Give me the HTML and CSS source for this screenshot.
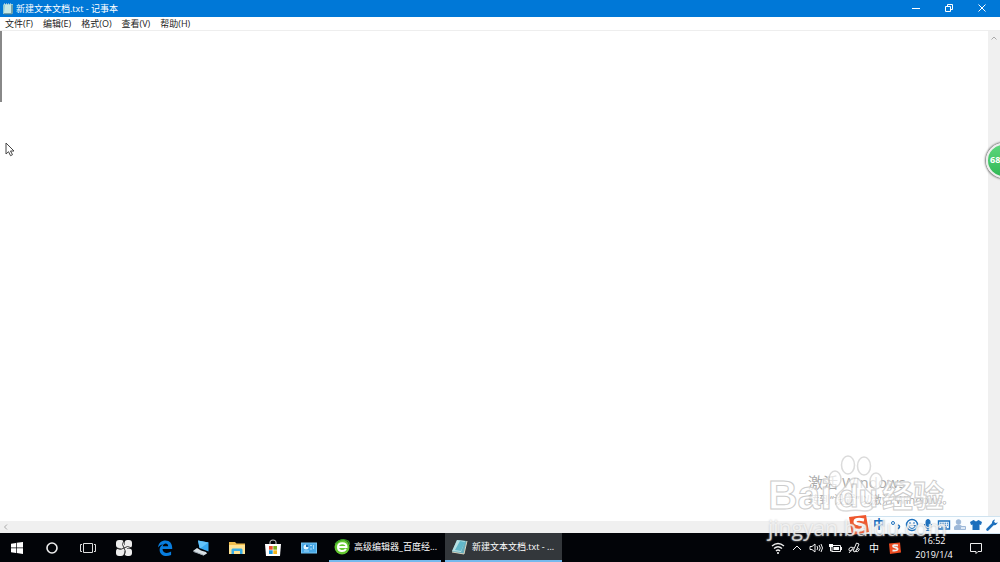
FILE: index.html
```html
<!DOCTYPE html>
<html lang="zh-CN">
<head>
    <meta charset="UTF-8">
    <meta name="viewport" content="width=device-width, initial-scale=1.0">
    <title>新建文本文档.txt - 记事本</title>
    <link rel="stylesheet" href="styles.css">
</head>
<body>
    <header class="titlebar">
        <svg class="app-icon" viewBox="0 0 12 12"><path d="M2 1h9v9l-1 1H1V2z" fill="#91cbd3"/><path d="M3 2h6v8H2z" fill="#c8e8e4"/><path d="M10 2v8M2 11h8" stroke="#547b82"/><path d="M2 1h8" stroke="#eee" stroke-dasharray="1"/></svg>
        <h1>新建文本文档.txt - 记事本</h1>
        <div class="window-buttons">
            <button aria-label="最小化"><svg viewBox="0 0 10 10"><path d="M1 5.500h8"/></svg></button>
            <button aria-label="还原"><svg viewBox="0 0 10 10"><path d="M1.500 3.500h5v5h-5zM3.500 3V1.500h5v5H7"/></svg></button>
            <button aria-label="关闭"><svg viewBox="0 0 10 10"><path d="M1.500 1.500l7 7M8.500 1.500l-7 7"/></svg></button>
        </div>
    </header>
    <nav class="menubar">
        <button>文件(F)</button>
        <button>编辑(E)</button>
        <button>格式(O)</button>
        <button>查看(V)</button>
        <button>帮助(H)</button>
    </nav>
    <main class="editor">
        <textarea class="document" aria-label="文档内容" spellcheck="false"></textarea>
        <div class="scroll-y">
            <button aria-label="向上滚动"><svg viewBox="0 0 8 8"><path d="M1.500 5.500L4 3l2.500 2.500"/></svg></button>
            <button aria-label="向下滚动"><svg viewBox="0 0 8 8"><path d="M1.500 3L4 5.500 6.500 3"/></svg></button>
        </div>
        <div class="scroll-x">
            <button aria-label="向左滚动"><svg viewBox="0 0 8 8"><path d="M5 1.500L2.500 4 5 6.500"/></svg></button>
        </div>
        <div class="caret"></div>
    </main>
    <footer class="taskbar">
        <div class="system">
            <button aria-label="开始"><svg viewBox="0 0 18 18"><path d="M3 4.700l5-.8v4.700H3zM8.700 3.800L15 3v5.600H8.700zM3 9.300h5V14l-5-.7zM8.700 9.300H15V15l-6.300-.9z" fill="#fff"/></svg></button>
            <button aria-label="搜索"><svg viewBox="0 0 18 18"><circle cx="9" cy="9" r="5" fill="none" stroke="#eee" stroke-width="1.600"/></svg></button>
            <button aria-label="任务视图"><svg viewBox="0 0 18 18" fill="none" stroke="#ddd"><path d="M4.500 4.500h9v9h-9zM3 5.500H1.500v7H3M15 5.500h1.500v7H15"/></svg></button>
            <button aria-label="四叶草"><svg viewBox="0 0 18 18"><g fill="#eee"><rect x="1" y="1" width="8" height="8" rx="3"/><rect x="9.500" y="1" width="7.500" height="8" rx="3"/><rect x="1" y="9.500" width="8" height="7.500" rx="3"/><rect x="9.500" y="9.500" width="7.500" height="7.500" rx="3"/><circle cx="9" cy="9" r="3"/></g><path d="M9 9Q6 6 9 1M9 9q3-3 8 0M9 9q3 3 0 8M9 9q-3 3-8 0" fill="none" stroke="#222" stroke-width=".9"/></svg></button>
        </div>
        <div class="pinned">
            <button aria-label="Edge"><svg viewBox="0 0 18 18"><path d="M2 8.500C2.500 4 5.500 1.500 9.500 1.500c4.500 0 7 3.300 6.700 8.400H6.500c.2 4.600 5.200 4.800 8.600 2.700V16c-5 2.400-11.500.8-11.500-5.200 0-2.300 1.200-4.400 3.500-5.400C4.800 5.500 3 6.800 2 8.500zm4.700-1.200h5.500c0-3.800-4.800-3.600-5.500 0z" fill="#087dde"/></svg></button>
            <button aria-label="此电脑"><svg viewBox="0 0 18 18"><path d="M6 1.500l10.500 2v9L7.500 9z" fill="#37a8ef"/><path d="M6 1.500l10.500 2-8 5.700-1-.5z" fill="#62c3fa"/><path d="M5 9l4 2.500 5 1.500 1 1.500-3.500 2L1 12z" fill="#d8e0e5"/><path d="M1.500 12.500l10 3.500" stroke="#a1adb5"/></svg></button>
            <button aria-label="文件资源管理器"><svg viewBox="0 0 18 18"><path d="M1 3h6l1.500 1.500H17V15H1z" fill="#efbd4e"/><path d="M1 6h16v9H1z" fill="#ffe394"/><path d="M3.500 15v-4.500l1-1h9l1 1V15H12v-3H6v3z" fill="#39aee8"/></svg></button>
            <button aria-label="应用商店"><svg viewBox="0 0 18 18"><path d="M6 6V3q0-2 3-2t3 2v3" fill="none" stroke="#ccc"/><path d="M1 5h16l-1 12H2z" fill="#fff"/><path d="M5 7h3.700v3.700H5z" fill="#eb4d2f"/><path d="M9.300 7H13v3.700H9.300z" fill="#7caf1f"/><path d="M5 11.300h3.700V15H5z" fill="#1c98df"/><path d="M9.300 11.300H13V15H9.300z" fill="#f4b51b"/></svg></button>
            <button aria-label="控制面板"><svg viewBox="0 0 18 18"><path d="M1 3.500h16v11H1z" fill="#75c6f5"/><path d="M2 4.500h14v9H2z" fill="#48a8e6"/><circle cx="6" cy="8" r="2.500" fill="#dff5ff"/><path d="M6 8V5.500A2.500 2.500 0 0 1 8.500 8z" fill="#176ab0"/><path d="M10 6.500h2M13.500 6v4M11 9v2M4 12h5" stroke="#a6dbf8"/></svg></button>
        </div>
        <div class="tasks">
            <button class="task">
                <svg viewBox="0 0 18 18"><circle cx="9" cy="9" r="7.500" fill="#65c832"/><path d="M2 6Q9-1 15 3q2 2 1 4" fill="none" stroke="#389e25" stroke-width="1.200"/><path d="M5 9h8.500c0-5-8.500-5-8.500 0 0 5 6 5 8 2" fill="none" stroke="#fff" stroke-width="2"/></svg>
                <span>高级编辑器_百度经...</span>
            </button>
            <button class="task active">
                <svg viewBox="0 0 18 18"><path d="M6 2l10 1-3 13-12-2z" fill="#67aebd"/><path d="M6 2l8 1-4 11-9-1z" fill="#b6e0e2"/><path d="M9 3l5 1-4 9-6-1z" fill="#62b8ca"/><path d="M16 3l-3 13-12-2" fill="none" stroke="#d6d2bd"/></svg>
                <span>新建文本文档.txt - ...</span>
            </button>
        </div>
        <div class="tray">
            <button aria-label="网络"><svg viewBox="0 0 14 14"><path d="M1 5q6-5 12 0M3 7.500q4-3.500 8 0M5 10q2-2 4 0" stroke-width="1.400"/><circle cx="7" cy="12" r="1" fill="#fff" stroke="none"/></svg></button>
            <button aria-label="显示隐藏的图标"><svg viewBox="0 0 14 14"><path d="M3 9l4-4 4 4"/></svg></button>
            <button aria-label="音量"><svg viewBox="0 0 14 14"><path d="M1 5.500h2L6 3v8L3 8.500H1zM8 5q1.500 2 0 4M10 4q2.500 3 0 6M12 3q3 4 0 8"/></svg></button>
            <button aria-label="电池"><svg viewBox="0 0 14 14"><path d="M4 4.500h8.500v6H4zM13.500 6v3M2.500 6v4H4"/><path d="M5.500 6h5.500v3H5.500zM1 3h4v3H1z" fill="#fff" stroke="none"/></svg></button>
            <button aria-label="手写笔"><svg viewBox="0 0 14 14"><path d="M6.500 9l3-7 2.500 1-3 7-2 1zM7 7Q3 5 2 8c-1 3 4 2 4 0s-3 3-4 4M8 10q3 2 4-1c1-2-1-2-2 0"/></svg></button>
            <button class="lang">中</button>
            <button aria-label="搜狗输入法"><svg viewBox="0 0 14 14"><path d="M1 2.500l11-1 1 10-11 1.500z" fill="#ed4b20" stroke="none"/><path d="M10 4.500q-5-1-5 .5 0 1 2 1.500 3 .5 2.500 2Q9 10 4.500 9.500" stroke-width="1.800"/></svg></button>
        </div>
        <time class="clock" datetime="2019-01-04T16:52"><span>16:52</span><span>2019/1/4</span></time>
        <button class="notify" aria-label="通知"><svg viewBox="0 0 14 14"><path d="M1.500 2.500h11v8H9L7 12.500v-2H1.500z"/></svg></button>
    </footer>

    <div class="activate">
        <p class="activate-title">激活 Windows</p>
        <p class="activate-text">转到“设置”以激活 Windows。</p>
    </div>

    <!-- Sogou input bar -->
    <div class="ime">
        <svg class="ime-logo" viewBox="0 0 22 22"><path d="M1 3l17-2 3 17-17 3z" fill="#ef572d"/><path d="M16 6Q7 4 7 8c0 3 9 1 8.500 5-.5 4-6 3.500-9.500 2.500" fill="none" stroke="#fff" stroke-width="3"/></svg>
        <button class="ime-lang">中</button>
        <button aria-label="标点"><svg viewBox="0 0 14 14"><circle cx="4" cy="5" r="1.500"/><path d="M9 7q3 1 0 4" stroke-width="1.600"/></svg></button>
        <button aria-label="表情"><svg viewBox="0 0 14 14"><circle cx="7" cy="7" r="5.500" stroke-width="1.400"/><path d="M5 4v2M9 4v2M3.500 7.500h7q-1 3-3.500 3t-3.500-3z"/></svg></button>
        <button aria-label="语音"><svg viewBox="0 0 14 14"><rect x="5" y="1.500" width="4" height="7" rx="2" fill="#1d70bd"/><path d="M3.500 6v1q0 3.500 3.500 3.500T10.500 7V6M7 10v3M4.500 12.500h5"/></svg></button>
        <button aria-label="软键盘"><svg viewBox="0 0 14 14"><path d="M1.500 3h11v8h-11z" stroke-width="1.400"/><path d="M3 5.200h8M3 7.200h8" stroke-dasharray="1.500 .8"/><path d="M4 9.200h6"/></svg></button>
        <button class="ime-user" aria-label="登录"><svg viewBox="0 0 14 14"><circle cx="5.500" cy="4" r="2.300" fill="#9db8d8"/><path d="M1.500 11.500V9q1-2 4-2 2 0 3 1v3.500z" fill="#9db8d8"/><path d="M7.500 8.500h5v3h-5z" fill="#dce8f5"/></svg></button>
        <button aria-label="皮肤"><svg viewBox="0 0 14 14"><path d="M4.500 2L7 3.500 9.500 2l3.500 2-1 3-1.500-.5V12h-7V6.500L2 7 1 4z" fill="#1d70bd" stroke="none"/></svg></button>
        <button aria-label="工具"><svg viewBox="0 0 14 14"><path d="M2.500 11.500l6-6" stroke-width="2.600" stroke-linecap="round"/><path d="M10 1.500Q6.500 2 7 6q3 3 6-1.500L10.500 5 9 4z" fill="#1d70bd" stroke="none"/></svg></button>
    </div>

    <div class="watermark">
        <div class="brand">
            <span class="brand-bai">Bai</span>
            <svg class="paw" viewBox="0 0 54 60">
                <g fill="#fff" stroke="#ccc" stroke-width="1.500"><ellipse cx="20" cy="11" rx="6.500" ry="9"/><ellipse cx="36" cy="12" rx="6.500" ry="9"/><ellipse cx="7" cy="25" rx="6" ry="8"/><ellipse cx="48" cy="27" rx="6" ry="8"/><path d="M27 24c7 0 7 9 14 14 9 7 6 20-5 19-6-1-11-1-17 0C7 58 4 45 12 38c7-5 8-14 15-14z"/></g>
                <text x="11" y="53" class="paw-text">du</text>
            </svg>
            <span class="brand-cn">经验</span>
        </div>
        <div class="site">jingyan.baidu.com</div>
    </div>

    <div class="speed-ball">68</div>
    <svg class="pointer" viewBox="0 0 10 16"><path d="M1 1v11l2.500-2.300 2 4 2-1-2-3.700H9z" fill="#fff" stroke="#444"/></svg>
</body>
</html>
```
FILE: styles.css
```css
* {
    box-sizing: border-box;
}
body {
    margin: 0;
    height: 100vh;
    display: flex;
    flex-direction: column;
    position: relative;
    overflow: hidden;
    background: #fff;
    color: #222;
    font-family: "Open Sans", "Noto Sans CJK SC", sans-serif;
    font-size: 9px;
    line-height: 12px;
}
button {
    display: flex;
    align-items: center;
    justify-content: center;
    padding: 0;
    border: none;
    background: none;
    color: inherit;
    font: inherit;
    flex-shrink: 0;
}
svg {
    display: block;
    flex-shrink: 0;
}
.titlebar {
    height: 17px;
    display: flex;
    align-items: center;
    padding-left: 2px;
    background: #0078d7;
    color: #fff;
}
.app-icon {
    width: 12px;
    height: 12px;
}
h1 {
    margin: 0 0 0 2px;
    font-size: 9px;
    font-weight: normal;
}
.window-buttons {
    display: flex;
    margin-left: auto;
    padding: 0 2px 2px 0;
}
.window-buttons button {
    width: 33px;
}
.window-buttons svg {
    width: 10px;
    height: 10px;
    fill: none;
    stroke: #fff;
}
.menubar {
    height: 13px;
    display: flex;
    align-items: center;
    gap: 10px;
    padding-left: 5px;
}
.editor {
    flex: 1;
    min-height: 0;
    position: relative;
    display: grid;
    grid-template-columns: 1fr 12px;
    grid-template-rows: 1fr 12px;
    border-top: 1px solid #eee;
    background: #f0f0f0;
}
.document {
    width: 100%;
    height: 100%;
    padding: 0;
    border: none;
    outline: none;
    resize: none;
    background: #fff;
    font-family: inherit;
    font-size: 60px;
}
.scroll-y {
    display: flex;
    flex-direction: column;
    justify-content: space-between;
    align-items: center;
    padding-top: 3px;
}
.scroll-x {
    display: flex;
    align-items: center;
    padding-left: 2px;
}
.editor svg {
    width: 8px;
    height: 8px;
    fill: none;
    stroke: #aaa;
}
.caret {
    position: absolute;
    left: 0;
    top: 0;
    width: 2px;
    height: 71px;
    background: #888;
}
.taskbar {
    height: 29px;
    display: flex;
    background: #020408;
    color: #fff;
}
.system, .pinned, .tasks, .tray {
    display: flex;
}
.system button, .pinned button {
    width: 36px;
}
.system button:first-child {
    width: 34px;
}
.system svg, .pinned svg, .task svg {
    width: 18px;
    height: 18px;
}
.pinned {
    margin-left: 5px;
}
.tasks {
    margin-left: 2px;
    gap: 4px;
}
.task {
    width: 112px;
    gap: 3px;
    justify-content: flex-start;
    padding-left: 4px;
    border-bottom: 2px solid #76b9ed;
    white-space: nowrap;
}
.task.active {
    width: 117px;
    padding-left: 6px;
    background: #33373b;
}
.tray {
    margin-left: auto;
}
.tray button {
    width: 19px;
}
.tray svg, .notify svg {
    width: 14px;
    height: 14px;
    fill: none;
    stroke: #eee;
}
.tray .lang {
    width: 22px;
    font-size: 10px;
}
.clock {
    display: flex;
    flex-direction: column;
    align-items: center;
    width: 60px;
    padding-top: 1px;
    line-height: 14px;
}
.notify {
    width: 24px;
    margin-right: 12px;
}
.activate {
    position: absolute;
    right: 49px;
    bottom: 54px;
    width: 143px;
    color: #aaa;
    white-space: nowrap;
}
.activate p {
    margin: 0;
}
.activate-title {
    font-size: 15px;
    line-height: 20px;
}
.activate-text {
    font-size: 11px;
    line-height: 16px;
}
.watermark {
    position: absolute;
    right: 47px;
    bottom: 22px;
    width: 185px;
    color: rgba(255, 255, 255, 0.7);
    white-space: nowrap;
}
.brand {
    display: flex;
    align-items: flex-end;
    margin-bottom: 2px;
    line-height: 38px;
}
.brand-bai, .brand-cn {
    -webkit-text-stroke: 1px #ccc;
    font-weight: bold;
}
.brand-bai {
    width: 60px;
    font-family: "Liberation Sans", sans-serif;
    font-size: 41px;
}
.brand-cn {
    font-size: 31px;
}
.paw {
    width: 54px;
    height: 60px;
    opacity: 0.7;
    overflow: visible;
}
.paw-text {
    fill: #fff;
    stroke: #bbb;
    stroke-width: 1px;
    font-family: "Liberation Sans", sans-serif;
    font-size: 32px;
    font-weight: bold;
}
.site {
    font-size: 21px;
    line-height: 24px;
    text-shadow: 0 0 2px #bbb;
}
.ime {
    position: absolute;
    right: 0;
    bottom: 28px;
    height: 18px;
    display: flex;
    align-items: center;
    background: #fafdff;
    border: 1px solid #cfe3f0;
    border-right: none;
    color: #1d70bd;
}
.ime-logo {
    width: 22px;
    height: 22px;
    margin-left: -7px;
}
.ime button {
    width: 16px;
}
.ime button svg {
    width: 14px;
    height: 14px;
    fill: none;
    stroke: #1d70bd;
}
.ime .ime-lang {
    width: 18px;
    font-size: 12px;
    font-weight: bold;
}
.ime .ime-user svg {
    stroke: #9db8d8;
}
.speed-ball {
    position: absolute;
    right: -21px;
    top: 143px;
    width: 35px;
    height: 35px;
    padding-left: 2px;
    border: 2px solid #eee;
    border-radius: 50%;
    background: linear-gradient(#5cd67c, #32b956);
    box-shadow: 0 0 2px 1px #777;
    color: #fff;
    font-weight: bold;
    line-height: 29px;
}
.pointer {
    position: absolute;
    left: 5px;
    top: 142px;
    width: 10px;
    height: 16px;
}
```
